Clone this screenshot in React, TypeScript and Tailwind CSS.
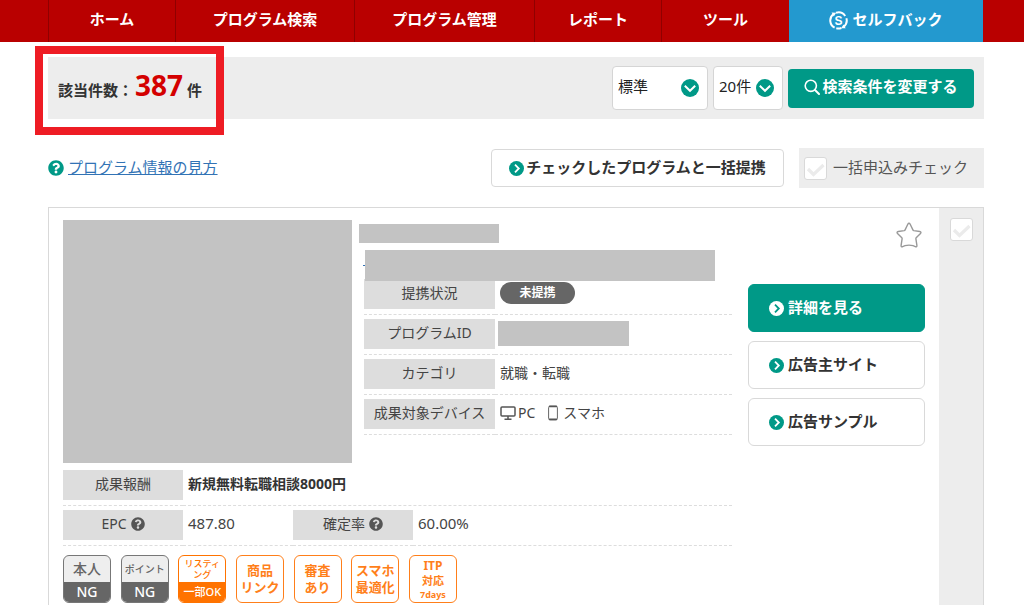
import React, { useState } from 'react';
import { FaQuestionCircle } from 'react-icons/fa';
import clsx from 'clsx';

const NAV_ITEMS = ['ホーム', 'プログラム検索', 'プログラム管理', 'レポート', 'ツール'];

const ArrowIcon: React.FC<{ inverted?: boolean }> = ({ inverted }) => (
  <svg className="size-[15px] shrink-0" viewBox="0 0 15 15" aria-hidden="true">
    <circle cx="7.5" cy="7.5" r="7.5" fill={inverted ? '#fff' : '#009987'} />
    <path d="M6 3.7l3.8 3.8L6 11.3" fill="none" stroke={inverted ? '#009987' : '#fff'} strokeWidth="1.8" />
  </svg>
);

const SelfBackIcon = () => (
  <svg className="size-[19px] shrink-0" viewBox="0 0 19 19" aria-hidden="true">
    <g fill="none" stroke="#fff" strokeWidth="2">
      <path d="M4.2 3.2A8.2 8.2 0 0 0 5.6 16.7" />
      <path d="M7 1.7A8.2 8.2 0 0 1 16.2 5" />
      <path d="M17.4 7.2A8.2 8.2 0 0 1 14.4 16" />
      <path d="M12.4 17A8.2 8.2 0 0 1 7.3 17.3" />
    </g>
    <path d="M2.6 1.6l4.6.1-2.4 3.8zM16.7 17.3l-4.6-.1 2.4-3.7z" fill="#fff" />
    <text x="9.5" y="14" textAnchor="middle" fontSize="12" fontWeight="700" fontFamily="Liberation Sans, sans-serif" fill="#fff">
      S
    </text>
  </svg>
);

const SearchIcon = () => (
  <svg className="size-4 shrink-0" viewBox="0 0 16 16" aria-hidden="true">
    <circle cx="6.8" cy="6.8" r="5.6" fill="none" stroke="#fff" strokeWidth="1.6" />
    <path d="M11 11l4 4" stroke="#fff" strokeWidth="2" strokeLinecap="round" />
  </svg>
);

const StarIcon = () => (
  <svg className="size-[26px]" viewBox="0 0 26 26" aria-hidden="true">
    <path
      d="M13 1.2c.6 0 .9.5 1.2 1.1l2.7 5.6c.2.4.5.6.9.7l6 .9c1.2.2 1.5 1.2.7 2l-4.3 4.3c-.3.3-.4.7-.3 1.1l1 6.5c.2 1.2-.6 1.7-1.6 1.2l-2.3-.9c-2.6-.8-5.4-.8-8 0l-2.3.9c-1 .5-1.8 0-1.6-1.2l1-6.5c.1-.4 0-.8-.3-1.1L1.5 11.5c-.8-.8-.5-1.8.7-2l6-.9c.4-.1.7-.3.9-.7l2.7-5.6c.3-.6.6-1.1 1.2-1.1z"
      fill="none"
      stroke="#999"
      strokeWidth="1.4"
    />
  </svg>
);

const PcIcon = () => (
  <svg className="mr-0.5 size-4 shrink-0" viewBox="0 0 16 16" aria-hidden="true">
    <rect x="1" y="2" width="14" height="9" rx="1" fill="none" stroke="#555" strokeWidth="1.5" />
    <path d="M8 11v3M4.5 14.2h7" stroke="#555" strokeWidth="1.5" />
  </svg>
);

const PhoneIcon = () => (
  <svg className="mr-1 ml-3 h-4 w-3 shrink-0" viewBox="0 0 12 16" aria-hidden="true">
    <rect x="1.6" y="1" width="8.8" height="14" rx="1.5" fill="none" stroke="#666" />
    <path d="M2 1.5h8M2 14.3h8" stroke="#555" strokeWidth="1.6" />
  </svg>
);

const CheckBox: React.FC<{ label?: string }> = ({ label }) => {
  const [checked, setChecked] = useState(false);

  return (
    <span className="grid size-[23px]">
      <input
        type="checkbox"
        aria-label={label}
        checked={checked}
        onChange={(e) => setChecked(e.target.checked)}
        className="col-start-1 row-start-1 size-full appearance-none rounded-[3px] border border-[#d9d9d9] bg-white"
      />
      <svg className="pointer-events-none col-start-1 row-start-1 size-full" viewBox="0 0 23 23" aria-hidden="true">
        <path d="M4 12l5.5 5.5L19.5 8" fill="none" stroke={checked ? '#009987' : '#ebebeb'} strokeWidth="3.2" />
      </svg>
    </span>
  );
};

interface SelectProps {
  label: string;
  options: string[];
  width: string;
}

const Select: React.FC<SelectProps> = ({ label, options, width }) => (
  <div className={clsx('relative', width)}>
    <select
      aria-label={label}
      className="h-11 w-full appearance-none rounded border border-[#d5d5d5] bg-white pb-0.5 pl-[5px] text-[15px] text-[#222]"
    >
      {options.map((option) => (
        <option key={option}>{option}</option>
      ))}
    </select>
    <svg
      className="pointer-events-none absolute top-[13px] right-[9px] size-[18px]"
      viewBox="0 0 18 18"
      aria-hidden="true"
    >
      <circle cx="9" cy="9" r="9" fill="#009987" />
      <path d="M3.8 6.8L9 11.8l5.2-5" fill="none" stroke="#fff" strokeWidth="2" />
    </svg>
  </div>
);

const Th: React.FC<{ children: React.ReactNode; width: string }> = ({ children, width }) => (
  <th scope="row" className={clsx('h-10 border-b border-dashed border-[#ddd] p-0 pt-1 align-top font-normal', width)}>
    <span className="flex h-[30px] items-center justify-center gap-1 bg-[#ddd] pb-0.5">{children}</span>
  </th>
);

const Td: React.FC<{ children: React.ReactNode; width?: string; colSpan?: number }> = ({ children, width, colSpan }) => (
  <td colSpan={colSpan} className={clsx('h-10 border-b border-dashed border-[#ddd] p-0 pt-1 align-top', width)}>
    <div className="flex h-[30px] items-center pb-0.5 pl-[5px]">{children}</div>
  </td>
);

const SplitBadge: React.FC<{ top: React.ReactNode; bottom: string; small?: boolean; orange?: boolean }> = ({
  top,
  bottom,
  small,
  orange,
}) => (
  <li
    className={clsx(
      'flex size-12 flex-col overflow-hidden rounded-md border text-center font-medium',
      orange ? 'border-[#ff7300] bg-white text-[#ff7300]' : 'border-[#777] bg-[#eee] text-[#666]'
    )}
  >
    <span className={clsx('flex flex-1 flex-col items-center justify-center', small ? 'text-[10px]' : 'text-sm')}>
      {top}
    </span>
    <span
      className={clsx(
        'flex h-5 items-center justify-center text-white',
        orange ? 'bg-[#ff7300] text-[11px]' : 'bg-[#666] text-sm'
      )}
    >
      {bottom}
    </span>
  </li>
);

const OrangeBadge: React.FC<{ children: React.ReactNode }> = ({ children }) => (
  <li className="flex size-12 flex-col items-center justify-center rounded-md border border-[#ff7f1a] bg-white text-[13px] leading-[17px] font-bold text-[#ff7f1a]">
    {children}
  </li>
);

const sideButton = 'flex h-12 items-center gap-1 rounded-md border pl-5 text-[15px] font-bold';

export default function App() {
  return (
    <div className="flex min-h-screen flex-col bg-white font-['Noto_Sans','Noto_Sans_CJK_JP',sans-serif] text-sm text-[#444]">
      <nav className="bg-[#b90000] pr-[41px] pl-12">
        <ul className="grid h-[42px] grid-cols-[127fr_179fr_180fr_127fr_128fr_194fr] text-[15px] font-bold text-white">
          {NAV_ITEMS.map((item) => (
            <li key={item} className="border-l border-[#8f0000]">
              <a href="#" className="flex h-full items-center justify-center pb-0.5">
                {item}
              </a>
            </li>
          ))}
          <li className="bg-[#2399cf]">
            <a href="#" className="flex h-full items-center justify-center gap-1 pb-0.5">
              <SelfBackIcon />
              セルフバック
            </a>
          </li>
        </ul>
      </nav>

      <main className="flex flex-1 flex-col pt-[15px] pr-10 pl-12">
        <section className="relative flex h-[62px] items-center justify-between bg-[#ededed] px-2.5">
          <p className="flex items-baseline pb-1.5 text-[15px] font-bold text-[#333]">
            該当件数：
            <span className="mr-1 ml-0.5 text-[28px] leading-8 text-[#d40000]">387</span>件
          </p>
          {/* highlight frame around the hit count */}
          <div className="pointer-events-none absolute -top-[11px] -left-[13px] h-[89px] w-[189px] border-8 border-[#ee1c24]" />
          <div className="flex items-center gap-[5px]">
            <Select label="並び順" options={['標準', '新着順', '報酬順']} width="w-24" />
            <Select label="表示件数" options={['20件', '50件', '100件']} width="w-[70px]" />
            <button
              type="button"
              className="flex h-[39px] w-[186px] items-center justify-center gap-0.5 rounded bg-[#009987] pb-0.5 text-[15px] font-bold text-white"
            >
              <SearchIcon />
              検索条件を変更する
            </button>
          </div>
        </section>

        <section className="mt-[29px] flex h-10 items-center justify-between text-[15px]">
          <a href="#" className="flex items-center gap-1 text-[#3273b5]">
            <FaQuestionCircle className="size-4 text-[#009987]" />
            <span className="underline">プログラム情報の見方</span>
          </a>
          <div className="flex items-center gap-[15px]">
            <button
              type="button"
              className="flex h-[38px] w-[293px] items-center justify-center gap-0.5 rounded border border-[#d9d9d9] font-bold text-[#333]"
            >
              <ArrowIcon />
              チェックしたプログラムと一括提携
            </button>
            <label className="flex h-10 w-[185px] items-center gap-1.5 bg-[#ededed] pl-[5px] text-[#555]">
              <CheckBox />
              一括申込みチェック
            </label>
          </div>
        </section>

        <article className="mt-[19px] flex flex-1 border border-b-0 border-[#d9d9d9]">
          <div className="flex flex-1 gap-4 pt-3 pr-3.5 pl-3.5">
            <div className="flex-1">
              <div className="flex gap-[7px]">
                <div className="h-[243px] w-[289px] shrink-0 bg-[#c3c3c3]" />
                <div className="flex-1 pt-1">
                  <div className="h-[19px] w-[140px] bg-[#c3c3c3]" />
                  <div className="relative z-10 mt-[7px] -mb-1.5 ml-1.5 h-[31px] w-[350px] bg-[#c3c3c3]">
                    <span className="absolute top-[15px] -left-0.5 h-px w-0.5 bg-[#3273b5]" />
                  </div>
                  <div className="pl-[5px]">
                    <table className="w-full border-separate border-spacing-0">
                      <tbody>
                        <tr>
                          <Th width="w-[131px]">提携状況</Th>
                          <Td>
                            <span className="flex h-[22px] w-[75px] items-center justify-center rounded-full bg-[#666] text-xs font-bold text-white">
                              未提携
                            </span>
                          </Td>
                        </tr>
                        <tr>
                          <Th width="w-[131px]">プログラムID</Th>
                          <Td>
                            <span className="-ml-0.5 h-[25px] w-[131px] bg-[#c3c3c3]" />
                          </Td>
                        </tr>
                        <tr>
                          <Th width="w-[131px]">カテゴリ</Th>
                          <Td>就職・転職</Td>
                        </tr>
                        <tr>
                          <Th width="w-[131px]">成果対象デバイス</Th>
                          <Td>
                            <PcIcon />
                            PC
                            <PhoneIcon />
                            スマホ
                          </Td>
                        </tr>
                      </tbody>
                    </table>
                  </div>
                </div>
              </div>

              <table className="mt-[3px] w-full border-separate border-spacing-0">
                <tbody>
                  <tr>
                    <Th width="w-[120px]">成果報酬</Th>
                    <Td colSpan={3}>
                      <strong className="text-[#333]">新規無料転職相談8000円</strong>
                    </Td>
                  </tr>
                  <tr>
                    <Th width="w-[120px]">
                      EPC <FaQuestionCircle className="size-3.5 text-[#555]" />
                    </Th>
                    <Td width="w-[110px]">
                      <span className="text-[15px]">487.80</span>
                    </Td>
                    <Th width="w-[120px]">
                      確定率 <FaQuestionCircle className="size-3.5 text-[#555]" />
                    </Th>
                    <Td>
                      <span className="text-[15px]">60.00%</span>
                    </Td>
                  </tr>
                </tbody>
              </table>

              <ul className="mt-[9px] flex w-[394px] justify-between">
                <SplitBadge top="本人" bottom="NG" />
                <SplitBadge top="ポイント" bottom="NG" small />
                <SplitBadge
                  top={
                    <>
                      <span className="text-[9px] leading-[11px]">リスティ</span>
                      <span className="text-[9px] leading-[11px]">ング</span>
                    </>
                  }
                  bottom="一部OK"
                  small
                  orange
                />
                <OrangeBadge>
                  <span>商品</span>
                  <span>リンク</span>
                </OrangeBadge>
                <OrangeBadge>
                  <span>審査</span>
                  <span>あり</span>
                </OrangeBadge>
                <OrangeBadge>
                  <span>スマホ</span>
                  <span>最適化</span>
                </OrangeBadge>
                <OrangeBadge>
                  <span className="text-xs leading-4">ITP</span>
                  <span className="text-[11px] leading-[14px]">対応</span>
                  <span className="text-[9px] leading-[13px]">7days</span>
                </OrangeBadge>
              </ul>
            </div>

            <div className="flex w-[177px] flex-col gap-[9px]">
              <button type="button" aria-label="お気に入りに追加" className="mt-0.5 mr-[3px] mb-[27px] self-end">
                <StarIcon />
              </button>
              <a href="#" className={clsx(sideButton, 'border-[#009987] bg-[#009987] text-white')}>
                <ArrowIcon inverted />
                詳細を見る
              </a>
              <a href="#" className={clsx(sideButton, 'border-[#d9d9d9] text-[#333]')}>
                <ArrowIcon />
                広告主サイト
              </a>
              <a href="#" className={clsx(sideButton, 'border-[#d9d9d9] text-[#333]')}>
                <ArrowIcon />
                広告サンプル
              </a>
            </div>
          </div>
          <div className="flex w-11 justify-center bg-[#ededed] pt-2.5">
            <CheckBox label="このプログラムを選択" />
          </div>
        </article>
      </main>
    </div>
  );
}
